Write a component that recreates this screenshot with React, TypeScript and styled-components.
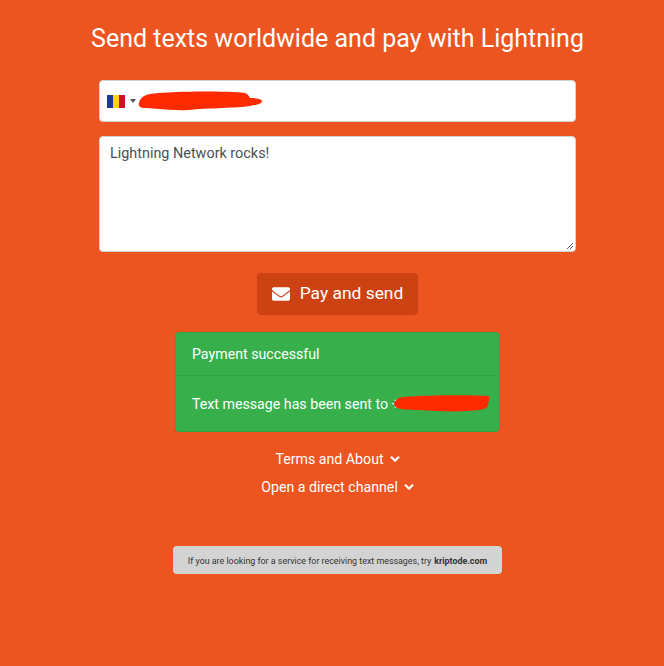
import React from "react";
import styled, { createGlobalStyle } from "styled-components";
import { FaEnvelope, FaChevronDown } from "react-icons/fa";

const Global = createGlobalStyle`
  html, body { margin: 0; padding: 0; background: #ec5520; height: 100%; overflow: hidden; }
  * { box-sizing: border-box; }
  body { font-family: Roboto, "Noto Sans", sans-serif; }
`;

const Page = styled.main`
  width: 664px;
  height: 666px;
  padding: 20px 0 0 11px;
  display: flex;
  flex-direction: column;
  align-items: center;
  background: #ec5520;
`;

const Title = styled.h1`
  margin: 0 0 23px;
  height: 37px;
  font-size: 25px;
  line-height: 37px;
  font-weight: 400;
  color: #fff;
  white-space: nowrap;
`;

const PhoneField = styled.div`
  width: 477px;
  height: 42px;
  background: #fff;
  border: 1px solid #ced4da;
  border-radius: 4px;
  display: flex;
  align-items: center;
  padding-left: 7px;
  gap: 5px;
  margin-bottom: 14px;
`;

const Flag = styled.svg`
  width: 18px;
  height: 13px;
  display: block;
`;

const Caret = styled.span`
  width: 0;
  height: 0;
  border-left: 3px solid transparent;
  border-right: 3px solid transparent;
  border-top: 4px solid #555;
`;

const Scribble = styled.svg`
  display: block;
  flex: none;
`;

const PhoneScribble = styled(Scribble)`
  margin-left: -3px;
`;

const Message = styled.div`
  width: 477px;
  height: 116px;
  background: #fff;
  border: 1px solid #ced4da;
  border-radius: 4px;
  padding: 6px 10px;
  font-size: 14.4px;
  line-height: 22px;
  color: #495057;
  position: relative;
  margin-bottom: 21px;
`;

const Grip = styled.svg`
  position: absolute;
  right: 1px;
  bottom: 1px;
  width: 8px;
  height: 8px;
`;

const PayButton = styled.button`
  width: 161px;
  height: 42px;
  border: none;
  border-radius: 4px;
  background: #cd4212;
  color: #fff;
  font-family: inherit;
  font-size: 17.4px;
  line-height: 1;
  display: flex;
  align-items: center;
  justify-content: center;
  gap: 10px;
  padding: 0;
  margin-bottom: 17px;
  white-space: nowrap;
`;

const Card = styled.section`
  width: 325px;
  background: #37b04c;
  border: 1px solid #32a346;
  border-radius: 4px;
  color: #fff;
  font-size: 14.2px;
  margin-bottom: 13px;
`;

const CardHeader = styled.div`
  height: 43px;
  padding: 0 16px;
  display: flex;
  align-items: center;
  border-bottom: 1px solid #32a346;
`;

const CardBody = styled.div`
  height: 55px;
  padding: 0 16px;
  display: flex;
  align-items: center;
  white-space: nowrap;
`;

const SentScribble = styled(Scribble)`
  margin-left: -6px;
`;

const Toggle = styled.div`
  height: 28px;
  display: flex;
  align-items: center;
  justify-content: center;
  gap: 6px;
  color: #fff;
  font-size: 14.2px;
  white-space: nowrap;
  svg { stroke: #fff; stroke-width: 40px; }
`;

const Notice = styled.div`
  width: 329px;
  height: 28px;
  margin-top: 45px;
  padding-top: 1px;
  background: #d3d3d3;
  border-radius: 4px;
  display: flex;
  align-items: center;
  justify-content: center;
  font-size: 8.9px;
  color: #333;
  white-space: nowrap;
  b { margin-left: 3px; font-weight: 700; }
`;

export default function App() {
  return (
    <Page>
      <Global />
      <Title>Send texts worldwide and pay with Lightning</Title>
      <PhoneField>
        <Flag viewBox="0 0 18 13">
          <rect width="6" height="13" fill="#1b3a8f" />
          <rect x="6" width="6" height="13" fill="#fcd116" />
          <rect x="12" width="6" height="13" fill="#ce1126" />
        </Flag>
        <Caret />
        <PhoneScribble width="126" height="20" viewBox="0 0 126 20">
          <path
            d="M1 12 C2 7 6 4 12 3 C40 0 85 0 107 2 C110 3 111 5 112 7 C118 7 124 8 124 10 C124 13 118 14 112 15 C100 17 70 17 50 19 C35 20 15 17 5 17 C2 16 0 15 1 12 Z"
            fill="#ff2a00"
          />
        </PhoneScribble>
      </PhoneField>
      <Message>
        Lightning Network rocks!
        <Grip viewBox="0 0 8 8">
          <path d="M1 7 L7 1 M4 7 L7 4" stroke="#666" strokeWidth="1" />
        </Grip>
      </Message>
      <PayButton>
        <FaEnvelope size={18} />
        Pay and send
      </PayButton>
      <Card>
        <CardHeader>Payment successful</CardHeader>
        <CardBody>
          Text message has been sent to +
          <SentScribble width="96" height="17" viewBox="0 0 96 17">
            <path
              d="M0 8 C2 4 6 2 10 2 C35 0 75 0 95 1 C96 4 95 6 94 8 C95 10 94 13 90 14 C70 18 45 16 25 15 C15 15 5 14 3 13 C1 12 0 10 0 8 Z"
              fill="#ff2a00"
            />
          </SentScribble>
        </CardBody>
      </Card>
      <Toggle>
        Terms and About <FaChevronDown size={10} />
      </Toggle>
      <Toggle>
        Open a direct channel <FaChevronDown size={10} />
      </Toggle>
      <Notice>
        If you are looking for a service for receiving text messages, try <b>kriptode.com</b>
      </Notice>
    </Page>
  );
}
